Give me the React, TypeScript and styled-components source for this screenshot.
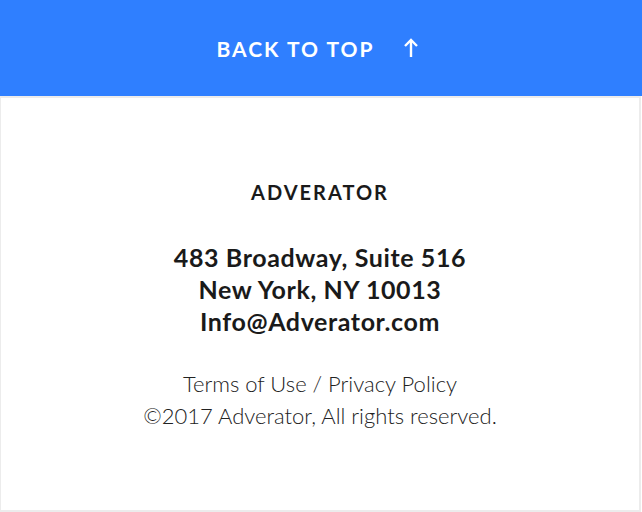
import React from "react";
import styled, { createGlobalStyle } from "styled-components";

const GlobalStyle = createGlobalStyle`
  html, body {
    margin: 0;
    padding: 0;
    background: #fff;
  }
  body {
    font-family: "Lato", "Liberation Sans", sans-serif;
  }
`;

const Page = styled.div`
  width: 642px;
  height: 512px;
  display: flex;
  flex-direction: column;
`;

const TopBar = styled.a`
  height: 96px;
  flex-shrink: 0;
  background: #2f7fff;
  color: #fff;
  display: flex;
  align-items: center;
  justify-content: center;
  gap: 28px;
  text-decoration: none;
  padding-right: 7px;
  box-sizing: border-box;
`;

const TopLabel = styled.span`
  font-size: 21px;
  font-weight: 700;
  letter-spacing: 2px;
`;

const Footer = styled.footer`
  flex: 1;
  width: 641px;
  box-sizing: border-box;
  border: 2px solid #ececec;
  border-left-width: 1px;
  display: flex;
  flex-direction: column;
  align-items: center;
  padding-top: 82px;
  color: #1a1a1a;
  text-align: center;
`;

const Brand = styled.h2`
  margin: 0;
  font-size: 20px;
  font-weight: 700;
  letter-spacing: 2px;
  line-height: 24px;
`;

const Address = styled.address`
  margin-top: 37px;
  font-style: normal;
  font-size: 25px;
  font-weight: 700;
  letter-spacing: 0.6px;
  line-height: 32px;
`;

const Legal = styled.div`
  margin-top: 31px;
  font-size: 22px;
  font-weight: 300;
  line-height: 32px;
  color: #222;
`;

const ArrowUp = () => (
  <svg width="16" height="20" viewBox="0 0 16 20" fill="none" stroke="#fff" strokeWidth="2.4">
    <path d="M8 19V2" />
    <path d="M2 8l6-6 6 6" />
  </svg>
);

export default function App() {
  return (
    <Page>
      <GlobalStyle />
      <TopBar href="#top">
        <TopLabel>BACK TO TOP</TopLabel>
        <ArrowUp />
      </TopBar>
      <Footer>
        <Brand>ADVERATOR</Brand>
        <Address>
          483 Broadway, Suite 516
          <br />
          New York, NY 10013
          <br />
          Info@Adverator.com
        </Address>
        <Legal>
          Terms of Use / Privacy Policy
          <br />
          ©2017 Adverator, All rights reserved.
        </Legal>
      </Footer>
    </Page>
  );
}
